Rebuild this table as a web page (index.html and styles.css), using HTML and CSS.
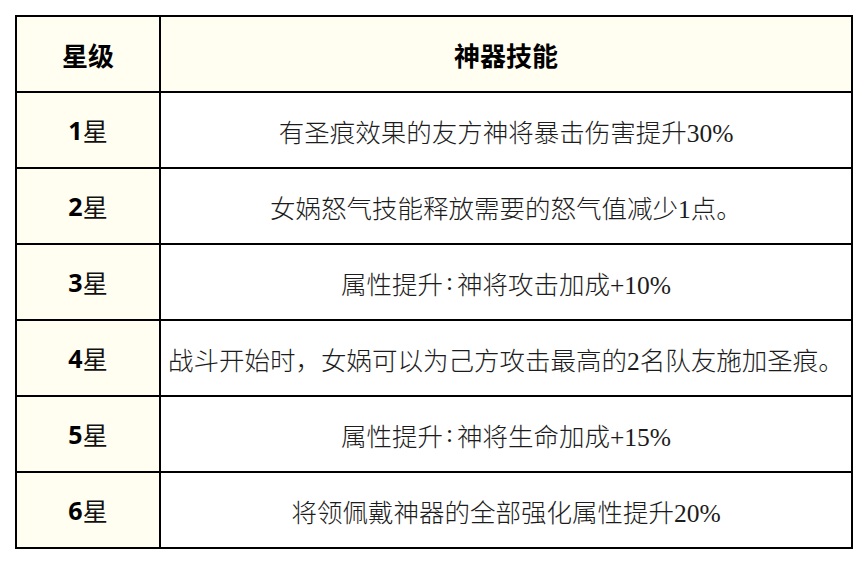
FILE: index.html
```html
<!DOCTYPE html>
<html lang="zh-CN">
<head>
<meta charset="utf-8">
<title>神器技能</title>
<link rel="stylesheet" href="styles.css">
</head>
<body>
<div class="page">
  <div class="table">
    <div class="cell head">星级</div>
    <div class="cell head">神器技能</div>

    <div class="cell star"><b>1</b>星</div>
    <div class="cell desc">有圣痕效果的友方神将暴击伤害提升30%</div>

    <div class="cell star"><b>2</b>星</div>
    <div class="cell desc">女娲怒气技能释放需要的怒气值减少1点。</div>

    <div class="cell star"><b>3</b>星</div>
    <div class="cell desc">属性提升<span class="colon">:</span>神将攻击加成+10%</div>

    <div class="cell star"><b>4</b>星</div>
    <div class="cell desc">战斗开始时，女娲可以为己方攻击最高的2名队友施加圣痕。</div>

    <div class="cell star"><b>5</b>星</div>
    <div class="cell desc">属性提升<span class="colon">:</span>神将生命加成+15%</div>

    <div class="cell star"><b>6</b>星</div>
    <div class="cell desc">将领佩戴神器的全部强化属性提升20%</div>
  </div>
</div>
</body>
</html>
```

FILE: styles.css
```css
html, body {
  margin: 0;
  padding: 0;
  background: #ffffff;
}

.page {
  padding: 15px 0 0 15px;
}

.table {
  width: 838px;
  box-sizing: border-box;
  display: grid;
  grid-template-columns: 142px 1fr;
  grid-auto-rows: 74px;
  gap: 2px;
  padding: 2px;
  background: #000000;
}

.cell {
  display: flex;
  align-items: center;
  justify-content: center;
  background: #ffffff;
  white-space: nowrap;
}

.head {
  background: #fffef1;
  font-family: "Noto Sans CJK SC", "Noto Sans", sans-serif;
  font-weight: 700;
  font-size: 26px;
  color: #000000;
}

.star {
  background: #fffef1;
  font-family: "Noto Sans CJK SC", "Noto Sans", sans-serif;
  font-size: 25px;
  color: #111111;
  font-weight: 400;
}

.star b {
  font-family: "Open Sans", "Noto Sans", sans-serif;
  font-weight: 700;
  color: #000000;
}

.desc {
  font-family: "Liberation Serif", "Noto Sans CJK SC", serif;
  font-size: 25.5px;
  font-weight: 300;
  color: #1c1c1c;
}

.colon {
  padding: 0 4px 0 3px;
}
```
